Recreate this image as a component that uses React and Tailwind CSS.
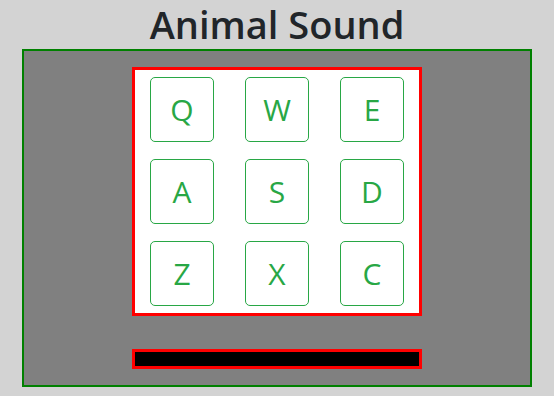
import React from "react";

const KEYS = ["Q", "W", "E", "A", "S", "D", "Z", "X", "C"];

export default function App() {
  return (
    <div className="bg-[#d3d3d3] pb-[9px]" style={{ fontFamily: '"Open Sans", "Noto Sans", sans-serif' }}>
      {/* Title */}
      <h1 className="text-center text-[38px] leading-[49px] font-semibold text-[#212529]">
        Animal Sound
      </h1>

      {/* Stage */}
      <div className="w-[92%] mx-auto border-2 border-[#008000] bg-[#808080] flex flex-col items-center py-4 gap-[33px]">
        <div className="w-[290px] h-[249px] border-[3px] border-[#ff0000] bg-white grid grid-cols-[64px_64px_64px] justify-center content-start gap-x-[31px] gap-y-[17px] pt-[7px]">
          {KEYS.map((k) => (
            <button
              key={k}
              className="w-16 h-[65px] border border-[#28a745] rounded-[5px] flex items-center justify-center text-[30px] text-[#28a745] bg-white"
            >
              {k}
            </button>
          ))}
        </div>
        <div className="w-[290px] h-5 border-[3px] border-[#ff0000] bg-black" />
      </div>
    </div>
  );
}
